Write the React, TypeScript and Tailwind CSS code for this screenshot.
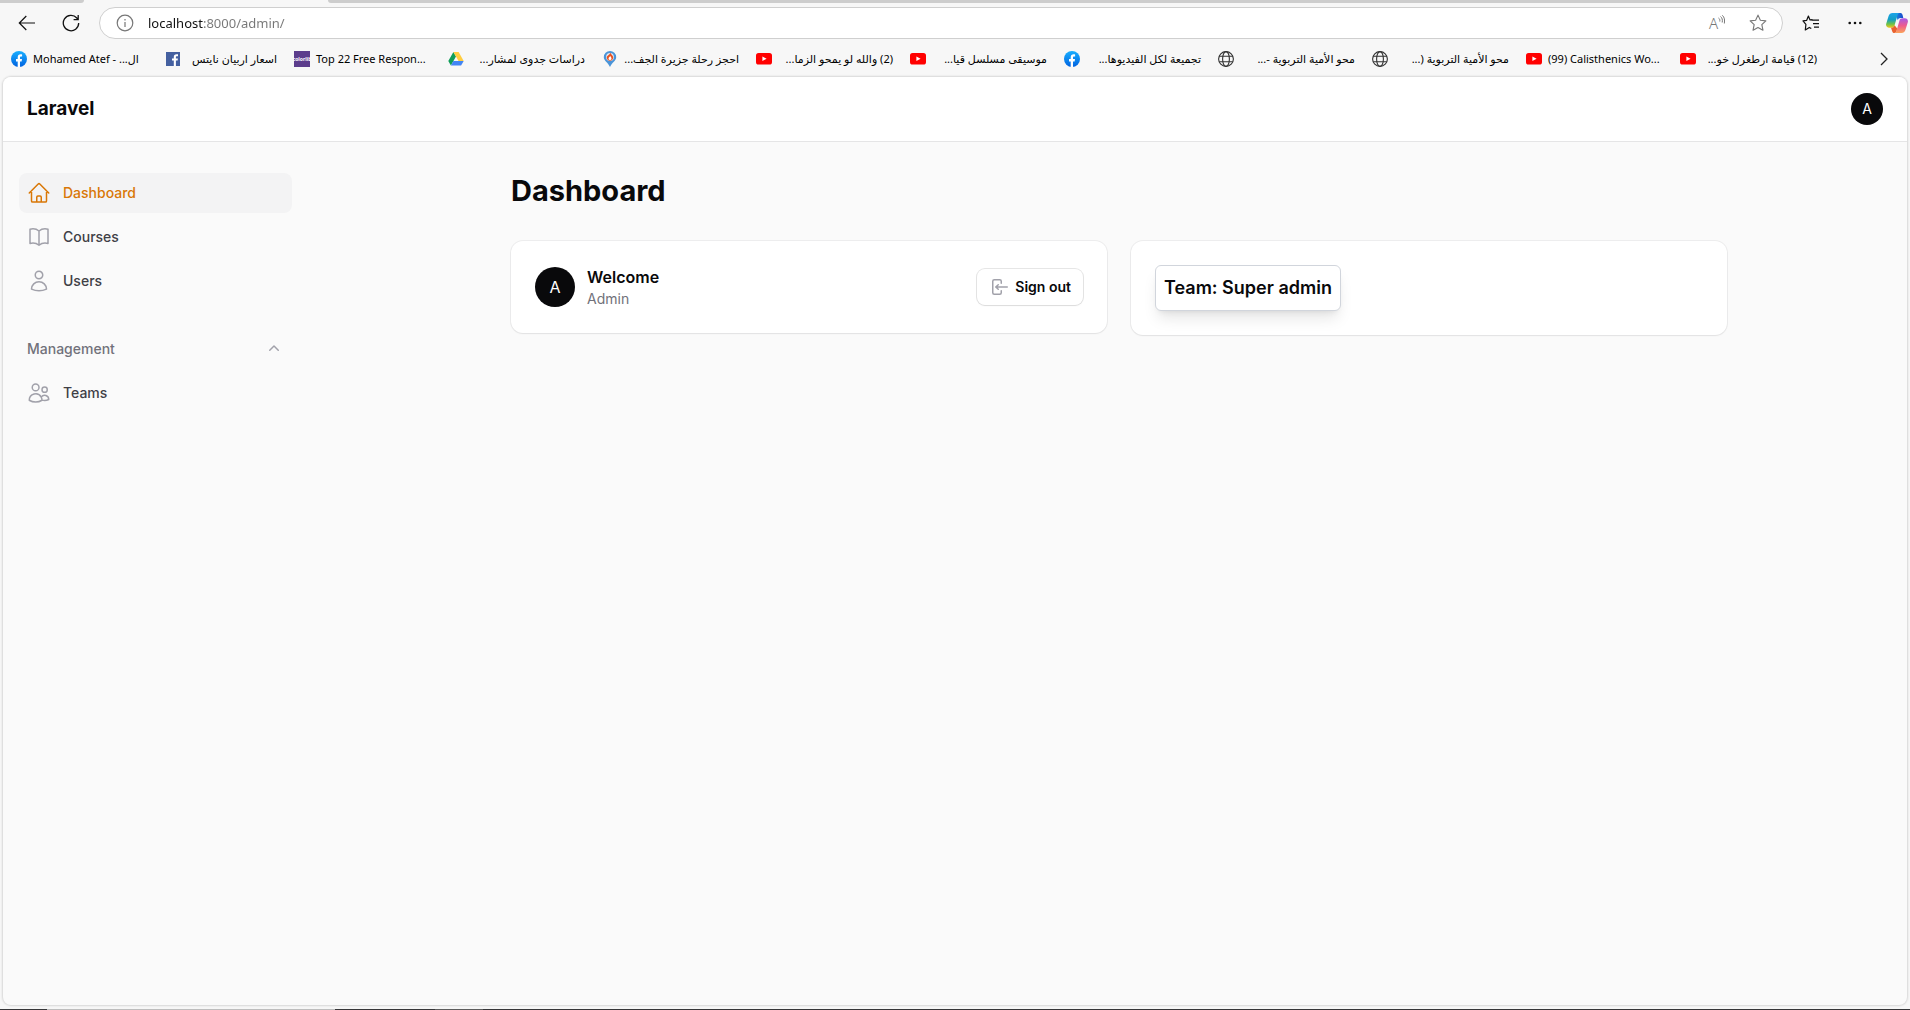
import type { ReactNode } from "react";
import {
  HiMiniArrowLeftOnRectangle,
  HiMiniChevronUp,
  HiOutlineBookOpen,
  HiOutlineHome,
  HiOutlineUser,
  HiOutlineUsers,
} from "react-icons/hi2";

const YouTube = () => (
  <svg viewBox="0 0 16 16" className="size-4 shrink-0" aria-hidden="true">
    <rect y="2" width="16" height="11.5" rx="2.6" fill="#f00" />
    <path d="M6.4 5.4 10.6 7.75 6.4 10.1z" fill="#fff" />
  </svg>
);

const FacebookRound = () => (
  <svg viewBox="0 0 16 16" className="size-4 shrink-0" aria-hidden="true">
    <defs>
      <linearGradient id="fb" x1="0" y1="0" x2="0" y2="1">
        <stop offset="0" stopColor="#19afff" />
        <stop offset="1" stopColor="#0062e0" />
      </linearGradient>
    </defs>
    <circle cx="8" cy="8" r="8" fill="url(#fb)" />
    <path
      d="M6.7 16v-5.4H5V8h1.7V6.6c0-2.2 1-3.3 3-3.3.6 0 1 .1 1.4.2v2.1h-1c-.9 0-1.1.4-1.1 1.3V8H11l-.4 2.6H9V16z"
      fill="#fff"
    />
  </svg>
);

const FacebookSquare = () => (
  <svg viewBox="0 0 14 14" className="size-3.5 shrink-0" aria-hidden="true">
    <rect width="14" height="14" fill="#4460a0" />
    <path d="M7.8 14V8.6H6V6.5h1.8V5c0-1.8 1-2.8 2.7-2.8.8 0 1.3.1 1.5.1v2h-1.1c-.9 0-1 .4-1 1v1.2h2l-.3 2.100H9.900V14z" fill="#fff" />
  </svg>
);

const Colorlib = () => (
  <span className="flex size-4 shrink-0 items-center justify-center overflow-hidden bg-[#5c3d8c] text-[5px] leading-none font-bold text-white">
    colorlib
  </span>
);

const Drive = () => (
  <svg viewBox="0 0 16 16" className="size-4 shrink-0" aria-hidden="true">
    <path d="M5.4 1 8 5.6 2.900 14.500.3 10z" fill="#0f9d58" />
    <path d="M5.400 1h5.200l5.100 9h-5.200z" fill="#ffcd40" />
    <path d="M5.400 10h10.300l-2.600 4.500H2.900z" fill="#4285f4" />
  </svg>
);

const Pin = () => (
  <svg viewBox="0 0 16 16" className="size-4 shrink-0" aria-hidden="true">
    <path d="M8 0a6.200 6.200 0 0 1 6.200 6.200c0 3.600-4.200 5-6.200 9.800-2-4.800-6.200-6.200-6.200-9.800A6.200 6.200 0 0 1 8 0z" fill="#4a94d8" />
    <circle cx="8" cy="6" r="3.900" fill="#dfe9f2" />
    <path d="M8.300 1.800c.4 1.600 2.900 2.500 2.900 4.800A3.200 3.200 0 0 1 8 9.700a3.200 3.200 0 0 1-3.200-3.100C4.800 4.500 7.600 4.100 8.300 1.800z" fill="#e8501e" />
    <path d="M8.200 4.800c.2 1 1.300 1.600 1.300 2.800a1.500 1.500 0 0 1-3 0C6.500 6.500 7.900 5.900 8.200 4.800z" fill="#fff" />
  </svg>
);

const Globe = () => (
  <svg viewBox="0 0 16 16" className="size-4 shrink-0" fill="none" stroke="#333" strokeWidth="1.100" aria-hidden="true">
    <circle cx="8" cy="8" r="7.400" />
    <ellipse cx="8" cy="8" rx="3.400" ry="7.400" />
    <path d="M1.200 5.300h13.600M1.200 10.700h13.600" />
  </svg>
);

const Copilot = () => (
  <svg viewBox="0 0 22 20" className="h-5 w-[22px]" aria-hidden="true">
    <defs>
      <linearGradient id="cpa" x1="0" y1="0" x2="0" y2="1">
        <stop offset="0" stopColor="#1ba4ea" />
        <stop offset=".45" stopColor="#159fc4" />
        <stop offset=".75" stopColor="#6cc24a" />
        <stop offset="1" stopColor="#f3c51a" />
      </linearGradient>
      <linearGradient id="cpb" x1="0" y1="0" x2="0" y2="1">
        <stop offset="0" stopColor="#a659e8" />
        <stop offset=".5" stopColor="#ee5b8c" />
        <stop offset="1" stopColor="#fba45a" />
      </linearGradient>
      <linearGradient id="cpc" x1="0" y1="0" x2="1" y2="0">
        <stop offset="0" stopColor="#1b7fe0" />
        <stop offset="1" stopColor="#1848c8" />
      </linearGradient>
    </defs>
    <path d="M11 0h3.200c1.200 0 1.900.6 2.300 1.800L17.300 5h-2.800c-1.500 0-2.300.8-2.700 2.200L10.500 4z" fill="url(#cpc)" />
    <path d="M6.500 0h7.200c-1.300.2-1.900 1.100-2.300 2.500L8.600 12.200c-.5 1.800-1.500 2.500-3.200 2.500H3.200C1 14.700-.4 13 .2 10.800L2.600 3C3.300 1 4.500 0 6.500 0z" fill="url(#cpa)" />
    <path d="M15.500 20H8.300c1.300-.2 1.900-1.100 2.300-2.500l2.800-9.700c.5-1.800 1.500-2.500 3.200-2.500h2.200c2.200 0 3.600 1.700 3 3.900L19.400 17c-.7 2-1.900 3-3.900 3z" fill="url(#cpb)" />
    <path d="M5 14.700c1.900.1 3-.7 3.600-2.500l2.600 3.300-.6 2c-.4 1.500-1 2.400-2.400 2.500-1.200 0-1.700-.7-2-1.800z" fill="#e9622f" />
  </svg>
);

const starPath = "M8 1 10.100 5.500 15 6.100 11.400 9.500 12.400 14.400 8 12 3.600 14.400 4.600 9.500 1 6.100 5.900 5.500z";

type Bookmark = { icon: ReactNode; label: string; rtl?: boolean; width?: string };

const bookmarks: Bookmark[] = [
  { icon: <FacebookRound />, label: "Mohamed Atef - ...ال", width: "w-[138px]" },
  { icon: <FacebookSquare />, label: "اسعار اربيان نايتس", rtl: true, width: "w-[111px]" },
  { icon: <Colorlib />, label: "Top 22 Free Respon..." },
  { icon: <Drive />, label: "دراسات جدوى لمشار...", rtl: true },
  { icon: <Pin />, label: "احجز رحلة جزيرة الجف...", rtl: true },
  { icon: <YouTube />, label: "(2) والله لو يمحو الزما...", rtl: true },
  { icon: <YouTube />, label: "موسيقى مسلسل قيا...", rtl: true },
  { icon: <FacebookRound />, label: "تجميعة لكل الفيديوها...", rtl: true },
  { icon: <Globe />, label: "محو الأمية التربوية -...", rtl: true },
  { icon: <Globe />, label: "محو الأمية التربوية (...", rtl: true },
  { icon: <YouTube />, label: "(99) Calisthenics Wo..." },
  { icon: <YouTube />, label: "(12) قيامة ارطغرل خو...", rtl: true },
];

function BrowserBar() {
  return (
    <header className="font-['Noto_Sans','DejaVu_Sans',sans-serif] text-black">
      <div className="flex h-[3px] justify-between">
        <div className="w-[84px] rounded-br-md bg-[#cdcdcd]" />
        <div className="ml-[244px] flex-1 rounded-bl-md bg-[#cdcdcd]" />
      </div>
      <div className="flex h-10 items-center pl-[17px]">
        <button aria-label="Back" className="mr-6 flex size-5 items-center justify-center">
          <svg viewBox="0 0 18 16" className="h-4 w-[18px]" fill="none" stroke="#111" strokeWidth="1.200">
            <path d="M17 8H1.500M8.300 1 1.300 8l7 7" />
          </svg>
        </button>
        <button aria-label="Refresh" className="mr-[18px] flex size-5 items-center justify-center">
          <svg viewBox="0 0 18 18" className="size-[18px]" fill="none" stroke="#111" strokeWidth="1.300">
            <path d="M16.700 9A7.700 7.700 0 1 1 14.800 4L16 5.300M16.200 1v4.600h-4.600" />
          </svg>
        </button>
        <div className="flex h-8 flex-1 items-center rounded-full border border-[#cfcfcf] bg-white pr-[15px] pl-4">
          <button aria-label="Site information">
            <svg viewBox="0 0 18 18" className="size-[18px]" fill="none" stroke="#777" strokeWidth="1.200">
              <circle cx="9" cy="9" r="7.800" />
              <path d="M9 8v5M9 5v1.500" />
            </svg>
          </button>
          <input
            aria-label="Address"
            defaultValue="localhost:8000/admin/"
            className="ml-3.5 min-w-0 flex-1 bg-[linear-gradient(90deg,#111_56px,#767676_56px)] bg-clip-text text-[13px] leading-5 text-transparent outline-none"
          />
          <button aria-label="Read aloud" className="mr-6 flex h-5 text-[#777]">
            <span className="text-[15px] leading-5 font-light">A</span>
            <svg viewBox="0 0 7 10" className="mt-0.5 h-2.5 w-[7px]" fill="none" stroke="currentColor">
              <path d="M.5 3c1.200.8 1.500 2 1.300 3.500M2.500 1.500c1.700 1.400 2.200 3.300 1.700 6M4.300.3C6.500 2.300 7 5 6.300 8.500" />
            </svg>
          </button>
          <button aria-label="Add to favorites">
            <svg viewBox="0 0 16 16" className="size-[18px]" fill="none" stroke="#777" strokeLinejoin="round">
              <path d={starPath} />
            </svg>
          </button>
        </div>
        <button aria-label="Favorites" className="mr-7 ml-[19px]">
          <svg viewBox="0 0 18 16" className="h-4 w-[18px]" fill="none" stroke="#111" strokeWidth="1.200" strokeLinejoin="round">
            <path d="M10.500 4.700 8 4.900 6.400 1 4.700 5.300 1 5.900l2.900 3.500L3.300 15l4-2.600 2 1.200M9.600 5.100H17M11 8.600h6M12 12.100h5" />
          </svg>
        </button>
        <button aria-label="Settings" className="mr-6">
          <svg viewBox="0 0 14 4" className="h-1 w-3.5" fill="#111">
            <circle cx="1.700" cy="2" r="1.300" />
            <circle cx="7" cy="2" r="1.300" />
            <circle cx="12.300" cy="2" r="1.300" />
          </svg>
        </button>
        <button aria-label="Copilot" className="mr-0.5">
          <Copilot />
        </button>
      </div>
      <nav aria-label="Bookmarks" className="flex h-[34px] items-center pr-[22px] pb-0.5 pl-[11px]">
        <ul className="flex flex-1 items-center gap-[17px]">
          {bookmarks.map((b, i) => (
            <li key={i} className={b.width ?? "w-[137px]"}>
              <a href="#" className="flex items-center gap-1.5 text-[11px] leading-4 whitespace-nowrap">
                {b.icon}
                <span className="flex-1" dir={b.rtl ? "rtl" : "ltr"}>
                  {b.label}
                </span>
              </a>
            </li>
          ))}
        </ul>
        <button aria-label="More bookmarks">
          <svg viewBox="0 0 8 14" className="h-3.5 w-2" fill="none" stroke="#222" strokeWidth="1.300">
            <path d="m1 1 6 6-6 6" />
          </svg>
        </button>
      </nav>
    </header>
  );
}

function NavItem({ icon, label, active }: { icon: ReactNode; label: string; active?: boolean }) {
  return (
    <li>
      <a
        href="#"
        aria-current={active ? "page" : undefined}
        className={
          active
            ? "flex items-center gap-3 rounded-lg bg-[#f3f3f4] p-2 text-sm font-medium text-[#d97706]"
            : "flex items-center gap-3 rounded-lg p-2 text-sm font-medium text-[#3f3f46]"
        }
      >
        <span className={active ? "text-2xl text-[#d97706]" : "text-2xl text-[#a1a1aa]"}>{icon}</span>
        {label}
      </a>
    </li>
  );
}

export default function App() {
  return (
    <div className="flex min-h-screen flex-col bg-[#f7f7f7]">
      <BrowserBar />
      <div className="mr-[3px] mb-1 ml-[3px] flex flex-1 flex-col overflow-hidden rounded-lg bg-[#fafafa] font-['Inter',sans-serif] text-[#09090b] shadow-[0_0_2px_1px_rgba(0,0,0,0.13)]">
        <div className="flex h-16 items-center justify-between bg-white px-6 shadow-[0_1px_0_#e5e5e6]">
          <a href="#" className="text-[19px] leading-5 font-bold">
            Laravel
          </a>
          <button aria-label="User menu" className="flex size-8 items-center justify-center rounded-full bg-[#09090b] text-sm text-white">
            A
          </button>
        </div>
        <div className="flex flex-1">
          <aside className="w-[328px] shrink-0 py-8 pr-[39px] pl-4">
            <nav className="flex flex-col gap-7">
              <ul className="flex flex-col gap-1">
                <NavItem icon={<HiOutlineHome />} label="Dashboard" active />
                <NavItem icon={<HiOutlineBookOpen />} label="Courses" />
                <NavItem icon={<HiOutlineUser />} label="Users" />
              </ul>
              <div className="flex flex-col gap-1">
                <button className="flex h-10 items-center justify-between px-2 text-sm font-medium text-[#71717a]">
                  Management
                  <HiMiniChevronUp className="size-5 text-[#a1a1aa]" />
                </button>
                <ul>
                  <NavItem icon={<HiOutlineUsers />} label="Teams" />
                </ul>
              </div>
            </nav>
          </aside>
          <main className="mx-auto flex w-full max-w-7xl flex-col gap-8 px-8 py-8">
            <h1 className="text-[29px] leading-9 font-bold">Dashboard</h1>
            <div className="grid grid-cols-2 items-start gap-6">
              <section className="flex items-center gap-3 rounded-xl bg-white p-6 shadow-xs ring-1 ring-[#09090b]/5">
                <div className="flex size-10 items-center justify-center rounded-full bg-[#09090b] text-base text-white">A</div>
                <div className="flex-1">
                  <h2 className="text-base leading-6 font-semibold">Welcome</h2>
                  <p className="text-sm leading-5 text-[#71717a]">Admin</p>
                </div>
                <button className="flex items-center gap-1.5 rounded-lg bg-white px-3 py-2 text-sm leading-5 font-semibold shadow-xs ring-1 ring-[#09090b]/10">
                  <HiMiniArrowLeftOnRectangle className="size-5 text-[#a1a1aa]" />
                  Sign out
                </button>
              </section>
              <section className="flex rounded-xl bg-white p-6 shadow-xs ring-1 ring-[#09090b]/5">
                <p className="rounded-md border border-gray-300 bg-white p-2 text-lg leading-7 font-semibold shadow-lg">
                  Team: Super admin
                </p>
              </section>
            </div>
          </main>
        </div>
      </div>
      <div className="flex h-px bg-[#363638]">
        <div className="w-[47px]" />
        <div className="w-[288px] bg-[#bdbdbd]" />
        <div className="w-[100px]" />
        <div className="w-12 bg-[#5c5c5c]" />
      </div>
    </div>
  );
}
